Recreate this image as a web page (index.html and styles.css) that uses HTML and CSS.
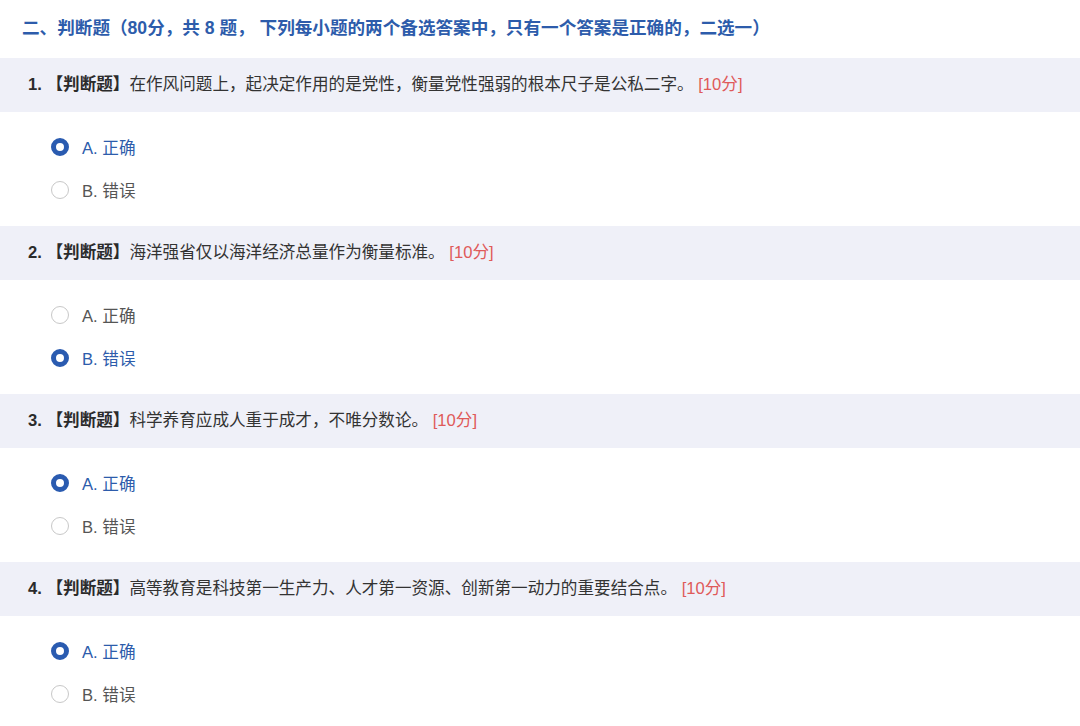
FILE: index.html
```html
<!DOCTYPE html>
<html lang="zh-CN">
<head>
    <meta charset="UTF-8">
    <title>判断题</title>
    <link rel="stylesheet" href="styles.css">
</head>
<body>

<div class="section">
    <h2 class="section-title">二、判断题（80分，共 8 题， 下列每小题的两个备选答案中，只有一个答案是正确的，二选一）</h2>

    <div class="question">
        <div class="stem"><b>1. 【判断题】</b>在作风问题上，起决定作用的是党性，衡量党性强弱的根本尺子是公私二字。 <span class="score">[10分]</span></div>
        <ul class="options">
            <li class="option checked"><span class="radio"></span>A. 正确</li>
            <li class="option"><span class="radio"></span>B. 错误</li>
        </ul>
    </div>

    <div class="question">
        <div class="stem"><b>2. 【判断题】</b>海洋强省仅以海洋经济总量作为衡量标准。 <span class="score">[10分]</span></div>
        <ul class="options">
            <li class="option"><span class="radio"></span>A. 正确</li>
            <li class="option checked"><span class="radio"></span>B. 错误</li>
        </ul>
    </div>

    <div class="question">
        <div class="stem"><b>3. 【判断题】</b>科学养育应成人重于成才，不唯分数论。 <span class="score">[10分]</span></div>
        <ul class="options">
            <li class="option checked"><span class="radio"></span>A. 正确</li>
            <li class="option"><span class="radio"></span>B. 错误</li>
        </ul>
    </div>

    <div class="question">
        <div class="stem"><b>4. 【判断题】</b>高等教育是科技第一生产力、人才第一资源、创新第一动力的重要结合点。 <span class="score">[10分]</span></div>
        <ul class="options">
            <li class="option checked"><span class="radio"></span>A. 正确</li>
            <li class="option"><span class="radio"></span>B. 错误</li>
        </ul>
    </div>
</div>

</body>
</html>
```

FILE: styles.css
```css
body {
    margin: 0;
    background: #ffffff;
    font-family: "Liberation Sans", "Noto Sans CJK SC", sans-serif;
    color: #333333;
}

.section-title {
    margin: 0;
    height: 58px;
    line-height: 57px;
    padding-left: 22px;
    font-size: 17.6px;
    font-weight: bold;
    color: #2d5cab;
}

.stem {
    height: 54px;
    line-height: 54px;
    padding-left: 28px;
    background-color: #eff0f8;
    font-size: 16.6px;
    color: #333333;
}

.stem b {
    color: #2b2b2b;
}

.score {
    color: #df5a5a;
}

.options {
    list-style: none;
    margin: 0;
    padding: 13px 0 15px 51px;
}

.option {
    display: flex;
    align-items: center;
    height: 43px;
    font-size: 16.6px;
    color: #555555;
}

.radio {
    box-sizing: border-box;
    width: 18px;
    height: 18px;
    margin-right: 13px;
    border: 1px solid #c8c8c8;
    border-radius: 50%;
    background: #ffffff;
}

.option.checked {
    color: #2d5cab;
}

.option.checked .radio {
    border: 5px solid #2a5bb0;
}
```
